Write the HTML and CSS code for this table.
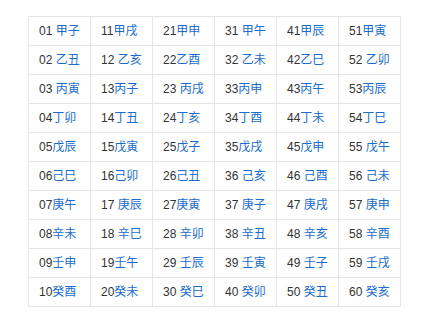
FILE: index.html
```html
<!DOCTYPE html>
<html lang="zh-CN">
<head>
<meta charset="utf-8">
<title>六十甲子</title>
<link rel="stylesheet" href="styles.css">
</head>
<body>
<table class="jz">
<tbody>
<tr><td><span class="n">01</span> <a class="g">甲子</a></td><td><span class="n">11</span><a class="g">甲戌</a></td><td><span class="n">21</span><a class="g">甲申</a></td><td><span class="n">31</span> <a class="g">甲午</a></td><td><span class="n">41</span><a class="g">甲辰</a></td><td><span class="n">51</span><a class="g">甲寅</a></td></tr>
<tr><td><span class="n">02</span> <a class="g">乙丑</a></td><td><span class="n">12</span> <a class="g">乙亥</a></td><td><span class="n">22</span><a class="g">乙酉</a></td><td><span class="n">32</span> <a class="g">乙未</a></td><td><span class="n">42</span><a class="g">乙巳</a></td><td><span class="n">52</span> <a class="g">乙卯</a></td></tr>
<tr><td><span class="n">03</span> <a class="g">丙寅</a></td><td><span class="n">13</span><a class="g">丙子</a></td><td><span class="n">23</span> <a class="g">丙戌</a></td><td><span class="n">33</span><a class="g">丙申</a></td><td><span class="n">43</span><a class="g">丙午</a></td><td><span class="n">53</span><a class="g">丙辰</a></td></tr>
<tr><td><span class="n">04</span><a class="g">丁卯</a></td><td><span class="n">14</span><a class="g">丁丑</a></td><td><span class="n">24</span><a class="g">丁亥</a></td><td><span class="n">34</span><a class="g">丁酉</a></td><td><span class="n">44</span><a class="g">丁未</a></td><td><span class="n">54</span><a class="g">丁巳</a></td></tr>
<tr><td><span class="n">05</span><a class="g">戊辰</a></td><td><span class="n">15</span><a class="g">戊寅</a></td><td><span class="n">25</span><a class="g">戊子</a></td><td><span class="n">35</span><a class="g">戊戌</a></td><td><span class="n">45</span><a class="g">戊申</a></td><td><span class="n">55</span> <a class="g">戊午</a></td></tr>
<tr><td><span class="n">06</span><a class="g">己巳</a></td><td><span class="n">16</span><a class="g">己卯</a></td><td><span class="n">26</span><a class="g">己丑</a></td><td><span class="n">36</span> <a class="g">己亥</a></td><td><span class="n">46</span> <a class="g">己酉</a></td><td><span class="n">56</span> <a class="g">己未</a></td></tr>
<tr><td><span class="n">07</span><a class="g">庚午</a></td><td><span class="n">17</span> <a class="g">庚辰</a></td><td><span class="n">27</span><a class="g">庚寅</a></td><td><span class="n">37</span> <a class="g">庚子</a></td><td><span class="n">47</span> <a class="g">庚戌</a></td><td><span class="n">57</span> <a class="g">庚申</a></td></tr>
<tr><td><span class="n">08</span><a class="g">辛未</a></td><td><span class="n">18</span> <a class="g">辛巳</a></td><td><span class="n">28</span> <a class="g">辛卯</a></td><td><span class="n">38</span> <a class="g">辛丑</a></td><td><span class="n">48</span> <a class="g">辛亥</a></td><td><span class="n">58</span> <a class="g">辛酉</a></td></tr>
<tr><td><span class="n">09</span><a class="g">壬申</a></td><td><span class="n">19</span><a class="g">壬午</a></td><td><span class="n">29</span> <a class="g">壬辰</a></td><td><span class="n">39</span> <a class="g">壬寅</a></td><td><span class="n">49</span> <a class="g">壬子</a></td><td><span class="n">59</span> <a class="g">壬戌</a></td></tr>
<tr><td><span class="n">10</span><a class="g">癸酉</a></td><td><span class="n">20</span><a class="g">癸未</a></td><td><span class="n">30</span> <a class="g">癸巳</a></td><td><span class="n">40</span> <a class="g">癸卯</a></td><td><span class="n">50</span> <a class="g">癸丑</a></td><td><span class="n">60</span> <a class="g">癸亥</a></td></tr>
</tbody>
</table>
</body>
</html>
```
FILE: styles.css
```css
html, body {
  margin: 0;
  background: #fff;
}
body {
  padding: 16px 0 0 28px;
  font-family: "Liberation Sans", "Noto Sans CJK SC", sans-serif;
  font-size: 12px;
  color: #333;
}
.jz {
  border-collapse: collapse;
  table-layout: fixed;
  width: 373px;
}
.jz td {
  border: 1px solid #e5e5e5;
  height: 28px;
  padding: 0 0 0 10px;
  white-space: nowrap;
  line-height: 16px;
  vertical-align: middle;
}
.n {
  color: #333;
}
.g {
  color: #1a6dcc;
  text-decoration: none;
}
```
